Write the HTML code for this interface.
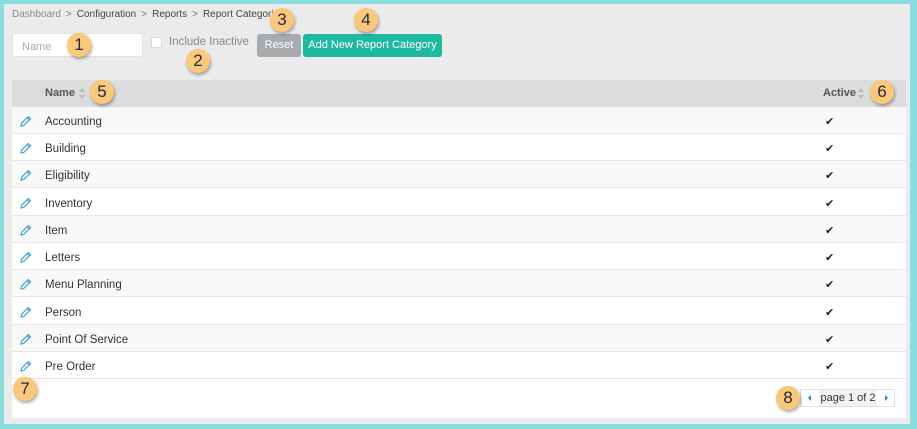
<!DOCTYPE html>
<html><head><meta charset="utf-8"><style>
*{margin:0;padding:0;box-sizing:border-box}
html,body{width:917px;height:429px;overflow:hidden}
body{background:#8cdde0;font-family:"Liberation Sans",sans-serif;position:relative}
.frame{position:absolute;left:4px;top:4px;width:906px;height:420px;background:#ebebeb}
.crumb{position:absolute;left:12px;top:9px;font-size:10px;color:#444}
.crumb .d{color:#8a8a8a}.crumb .s{color:#777;margin:0 5px}
.name{position:absolute;left:12px;top:33px;width:131px;height:24px;background:#fff;border:1px solid #e2e2e2;border-radius:2px;font-size:11px;color:#aaa;padding:7px 9px}
.cb{position:absolute;left:151px;top:37px;width:11px;height:11px;background:#fff;border:1px solid #ddd}
.inc{position:absolute;left:169px;top:36px;font-size:11.5px;color:#888}
.btn{position:absolute;top:34px;height:23px;border-radius:3px;color:#fff;font-size:11px;text-align:center;line-height:23px}
.reset{left:257px;width:44px;background:#a7abae}
.add{left:303px;width:139px;background:#1fb9a0}
.panel{position:absolute;left:12px;top:80px;width:894px;height:338px;background:#fff}
.hdr{position:absolute;left:0;top:0;width:894px;height:27px;background:#dcdcdc;font-size:11px;font-weight:bold;color:#555}
.hdr .n{position:absolute;left:33px;top:7px}
.hdr .a{position:absolute;left:811px;top:7px}
.sort{position:absolute;width:6px;height:11px}
.row{position:absolute;left:0;width:894px;height:27px;border-bottom:1px solid #e6e6e6;font-size:11.5px;color:#333}
.row:nth-child(odd){background:#f9f9f9}
.row .t{position:absolute;left:33px;top:9px}
.row svg.p{position:absolute;left:8px;top:8px}
.row .c{position:absolute;left:813px;top:8px;font-size:11px;color:#222}
.pager{position:absolute;left:800px;top:389px;width:95px;height:18px;border:1px solid #e2e2e2;background:#fff;font-size:11px;color:#333}
.pager .m{position:absolute;left:18px;top:0;width:58px;height:16px;background:#f2f2f2;text-align:center;line-height:16px}
.pager .l,.pager .r{position:absolute;top:5px;width:0;height:0;border-top:3px solid transparent;border-bottom:3px solid transparent}
.pager .l{left:7px;border-right:3px solid #1a8ccf}
.pager .r{left:84px;border-left:3px solid #1a8ccf}
.b{position:absolute;width:24px;height:24px;border-radius:50%;background:#fbc778;box-shadow:1px 2px 3px rgba(0,0,0,.35);color:#1b2a4a;font-size:17px;text-align:center;line-height:24px}
</style></head><body>
<div class="frame"></div>
<div class="crumb"><span class="d">Dashboard</span><span class="s">&gt;</span>Configuration<span class="s">&gt;</span>Reports<span class="s">&gt;</span>Report Categories</div>
<div class="name">Name</div>
<div class="cb"></div><div class="inc">Include Inactive</div>
<div class="btn reset">Reset</div>
<div class="btn add">Add New Report Category</div>
<div class="panel">
<div class="hdr"><span class="n">Name</span>
<svg class="sort" style="left:67px;top:8px" viewBox="0 0 6 11"><path d="M0 4L3 0L6 4Z M0 7L3 11L6 7Z" fill="#bbb"/></svg>
<span class="a">Active</span>
<svg class="sort" style="left:846px;top:8px" viewBox="0 0 6 11"><path d="M0 4L3 0L6 4Z M0 7L3 11L6 7Z" fill="#bbb"/></svg>
</div>
<div style="position:absolute;left:0;top:27px">
<div class="row" style="top:0"><svg class="p" width="12" height="12" viewBox="0 0 12 12"><path d="M1 11L1.6 8.2L8.3 1.5L10.5 3.7L3.8 10.4Z M7.2 2.6L9.4 4.8" fill="none" stroke="#2aa3d6" stroke-width="1.1"/></svg><span class="t">Accounting</span><span class="c">✔</span></div>
<div class="row" style="top:27px"><svg class="p" width="12" height="12" viewBox="0 0 12 12"><path d="M1 11L1.6 8.2L8.3 1.5L10.5 3.7L3.8 10.4Z M7.2 2.6L9.4 4.8" fill="none" stroke="#2aa3d6" stroke-width="1.1"/></svg><span class="t">Building</span><span class="c">✔</span></div>
<div class="row" style="top:54px"><svg class="p" width="12" height="12" viewBox="0 0 12 12"><path d="M1 11L1.6 8.2L8.3 1.5L10.5 3.7L3.8 10.4Z M7.2 2.6L9.4 4.8" fill="none" stroke="#2aa3d6" stroke-width="1.1"/></svg><span class="t">Eligibility</span><span class="c">✔</span></div>
<div class="row" style="top:82px"><svg class="p" width="12" height="12" viewBox="0 0 12 12"><path d="M1 11L1.6 8.2L8.3 1.5L10.5 3.7L3.8 10.4Z M7.2 2.6L9.4 4.8" fill="none" stroke="#2aa3d6" stroke-width="1.1"/></svg><span class="t">Inventory</span><span class="c">✔</span></div>
<div class="row" style="top:109px"><svg class="p" width="12" height="12" viewBox="0 0 12 12"><path d="M1 11L1.6 8.2L8.3 1.5L10.5 3.7L3.8 10.4Z M7.2 2.6L9.4 4.8" fill="none" stroke="#2aa3d6" stroke-width="1.1"/></svg><span class="t">Item</span><span class="c">✔</span></div>
<div class="row" style="top:136px"><svg class="p" width="12" height="12" viewBox="0 0 12 12"><path d="M1 11L1.6 8.2L8.3 1.5L10.5 3.7L3.8 10.4Z M7.2 2.6L9.4 4.8" fill="none" stroke="#2aa3d6" stroke-width="1.1"/></svg><span class="t">Letters</span><span class="c">✔</span></div>
<div class="row" style="top:163px"><svg class="p" width="12" height="12" viewBox="0 0 12 12"><path d="M1 11L1.6 8.2L8.3 1.5L10.5 3.7L3.8 10.4Z M7.2 2.6L9.4 4.8" fill="none" stroke="#2aa3d6" stroke-width="1.1"/></svg><span class="t">Menu Planning</span><span class="c">✔</span></div>
<div class="row" style="top:191px"><svg class="p" width="12" height="12" viewBox="0 0 12 12"><path d="M1 11L1.6 8.2L8.3 1.5L10.5 3.7L3.8 10.4Z M7.2 2.6L9.4 4.8" fill="none" stroke="#2aa3d6" stroke-width="1.1"/></svg><span class="t">Person</span><span class="c">✔</span></div>
<div class="row" style="top:218px"><svg class="p" width="12" height="12" viewBox="0 0 12 12"><path d="M1 11L1.6 8.2L8.3 1.5L10.5 3.7L3.8 10.4Z M7.2 2.6L9.4 4.8" fill="none" stroke="#2aa3d6" stroke-width="1.1"/></svg><span class="t">Point Of Service</span><span class="c">✔</span></div>
<div class="row" style="top:245px"><svg class="p" width="12" height="12" viewBox="0 0 12 12"><path d="M1 11L1.6 8.2L8.3 1.5L10.5 3.7L3.8 10.4Z M7.2 2.6L9.4 4.8" fill="none" stroke="#2aa3d6" stroke-width="1.1"/></svg><span class="t">Pre Order</span><span class="c">✔</span></div>
</div>
</div>
<div class="pager"><span class="l"></span><span class="m">page 1 of 2</span><span class="r"></span></div>
<div class="b" style="left:67px;top:33px">1</div>
<div class="b" style="left:186px;top:49px">2</div>
<div class="b" style="left:270px;top:8px">3</div>
<div class="b" style="left:354px;top:8px">4</div>
<div class="b" style="left:90px;top:80px">5</div>
<div class="b" style="left:870px;top:80px">6</div>
<div class="b" style="left:13px;top:377px">7</div>
<div class="b" style="left:776px;top:386px">8</div>
</body></html>
